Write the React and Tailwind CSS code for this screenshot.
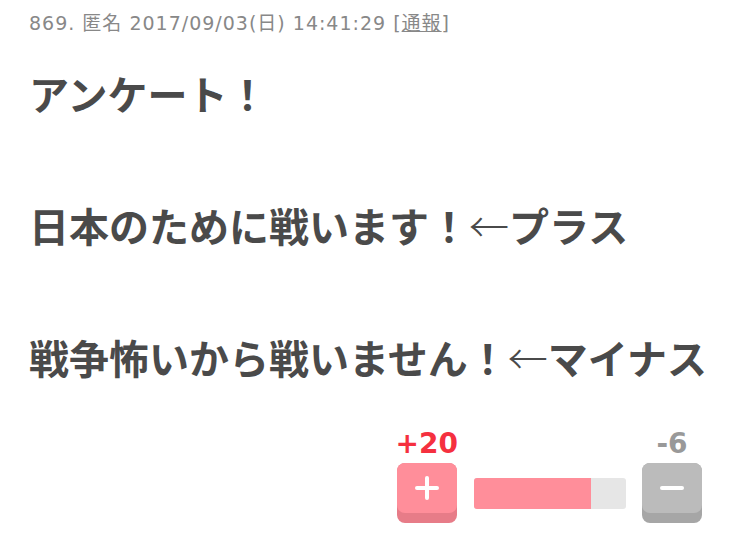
import React from 'react';

const post = {
  number: 869,
  name: '匿名',
  date: '2017/09/03(日) 14:41:29',
  lines: ['アンケート！', '', '日本のために戦います！←プラス', '', '戦争怖いから戦いません！←マイナス'],
  plus: 20,
  minus: 6,
};

// the arrow is drawn thin in the original, so render it outside the bold run
function Line({ text }) {
  const parts = text.split('←');
  if (parts.length === 1) return text;
  return (
    <>
      {parts[0]}
      <span className="font-light">←</span>
      {parts[1]}
    </>
  );
}

function VoteButton({ kind }) {
  const isPlus = kind === 'plus';
  return (
    <button
      className={`w-[60px] h-[60px] rounded-[8px] flex items-start justify-center ${
        isPlus ? 'bg-[#e77c88]' : 'bg-[#a6a6a6]'
      }`}
    >
      <div
        className={`w-[60px] h-[50px] rounded-[8px] flex items-center justify-center ${
          isPlus ? 'bg-[#ff8e9a]' : 'bg-[#bbbbbb]'
        }`}
      >
        <svg width="26" height="26" viewBox="0 0 26 26">
          <path d="M3 13h20" stroke="#fff" strokeWidth="4" strokeLinecap="round" />
          {isPlus && <path d="M13 3v20" stroke="#fff" strokeWidth="4" strokeLinecap="round" />}
        </svg>
      </div>
    </button>
  );
}

export default function App() {
  const total = post.plus + post.minus;
  const ratio = total ? (post.plus / total) * 100 : 50;

  return (
    <div className="w-[750px] h-[538px] bg-white overflow-hidden font-['DejaVu_Sans','Noto_Sans_CJK_JP',sans-serif]">
      {/* Header */}
      <div className="pl-[29px] pt-[10px] text-[19px] leading-[26px] tracking-[1px] text-[#888888] whitespace-nowrap">
        {post.number}. {post.name} {post.date} [<span className="underline">通報</span>]
      </div>

      {/* Body */}
      <div className="pl-[29px] mt-[24px] text-[40px] leading-[66px] font-bold text-[#4a4a4a] font-['Noto_Sans_CJK_JP',sans-serif]">
        {post.lines.map((line, i) => (
          <div key={i} className="h-[66px] whitespace-nowrap">
            <Line text={line} />
          </div>
        ))}
      </div>

      {/* Votes */}
      <div className="flex justify-end pr-[48px] mt-[35px]">
        <div className="flex items-end gap-4">
          <div className="flex flex-col items-center">
            <span className="text-[28px] leading-[38px] font-bold text-[#f5303f]">+{post.plus}</span>
            <VoteButton kind="plus" />
          </div>
          <div className="h-[60px] flex items-center">
            <div className="w-[152px] h-[31px] rounded-[3px] bg-[#e6e6e6] overflow-hidden">
              <div className="h-full bg-[#ff8e9a]" style={{ width: `${ratio}%` }} />
            </div>
          </div>
          <div className="flex flex-col items-center">
            <span className="text-[28px] leading-[38px] font-bold text-[#999999]">-{post.minus}</span>
            <VoteButton kind="minus" />
          </div>
        </div>
      </div>
    </div>
  );
}
